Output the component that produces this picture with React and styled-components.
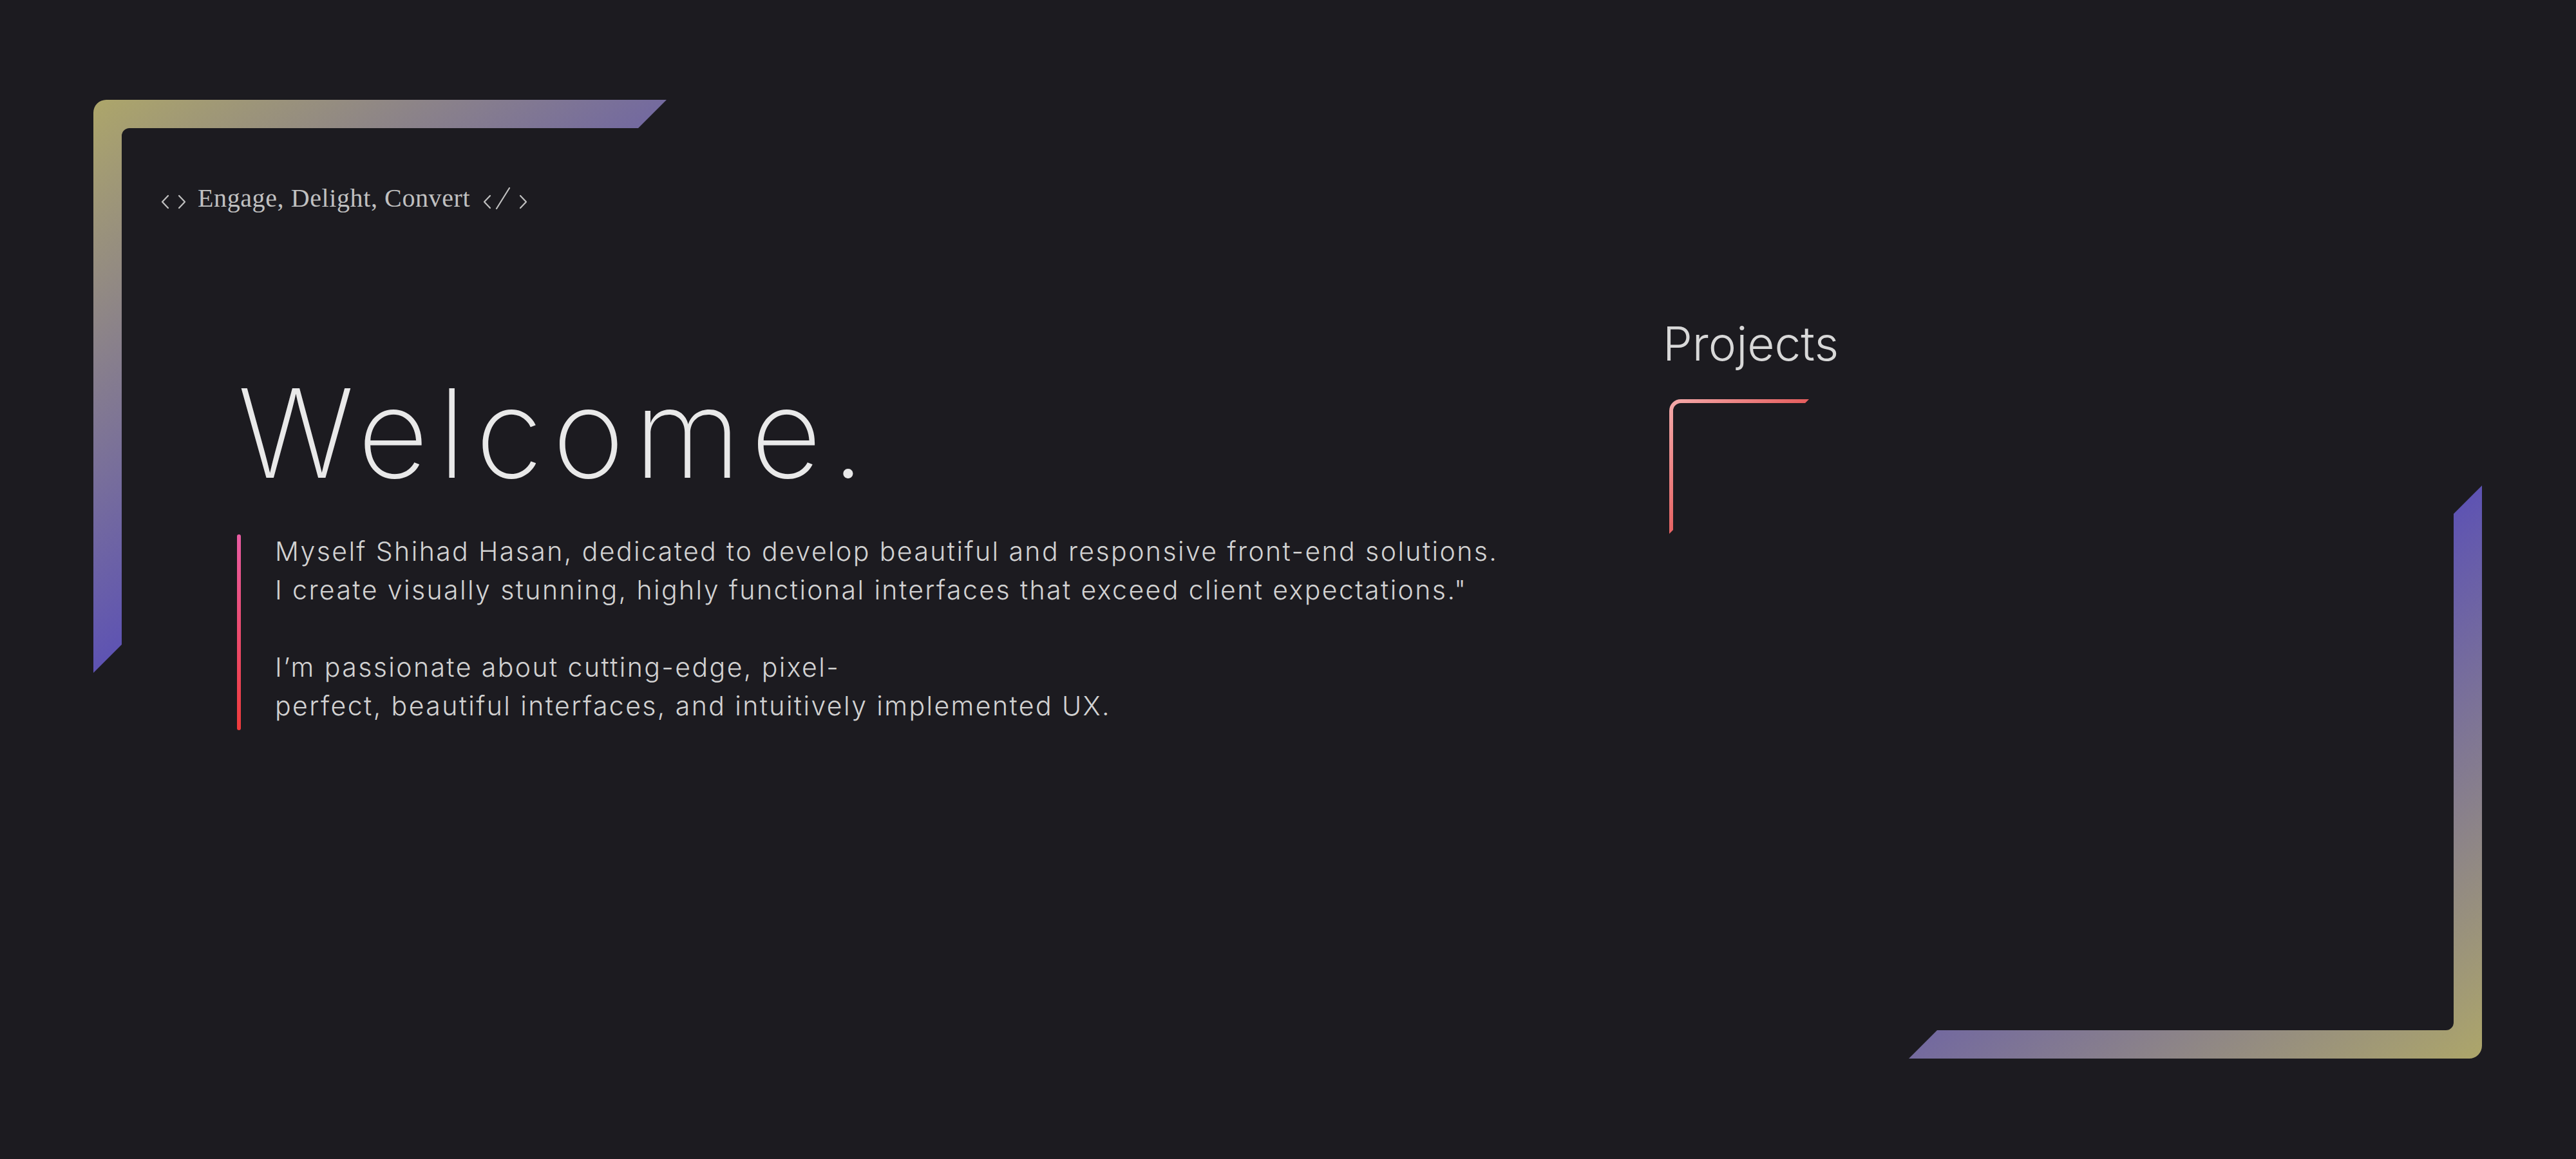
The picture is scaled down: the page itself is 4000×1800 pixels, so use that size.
import React from 'react';
import styled, { createGlobalStyle } from 'styled-components';

const GlobalStyle = createGlobalStyle`
  html, body {
    margin: 0;
    padding: 0;
    background: #1c1b20;
  }
  body {
    min-height: 1800px;
    font-family: Inter, "Noto Sans", sans-serif;
  }
`;

const Page = styled.main`
  display: flex;
  align-items: flex-start;
  min-height: 1800px;
  padding: 155px 0 0 145px;
  box-sizing: border-box;
  background: #1c1b20;
`;

const Hero = styled.section`
  position: relative;
  flex: 0 0 2437px;
  min-height: 890px;
  box-sizing: border-box;
  padding: 133px 0 0 105px;
`;

const Frame = styled.svg`
  position: absolute;
  left: ${p => p.$left}px;
  top: ${p => p.$top}px;
  transform: ${p => (p.$flip ? 'rotate(180deg)' : 'none')};
  pointer-events: none;
`;

const Tagline = styled.p`
  display: flex;
  align-items: center;
  height: 40px;
  margin: 0;
  color: #c0c0c0;
  font-family: "Liberation Serif", serif;
  font-size: 40px;
  line-height: 1;
`;

const TagText = styled.span`
  margin: 0 20px 0 17px;
  letter-spacing: 0.6px;
`;

const Intro = styled.div`
  margin: 249px 0 0 118px;
`;

const Title = styled.h1`
  margin: 0 0 0 1px;
  color: #e9e9e9;
  font-family: Inter, sans-serif;
  font-size: 191px;
  font-weight: 200;
  line-height: 1;
  letter-spacing: 15px;
`;

const Quote = styled.div`
  display: flex;
  align-items: flex-start;
  gap: 53px;
  margin-top: 58px;
`;

const Bar = styled.span`
  flex: 0 0 6px;
  height: 304px;
  margin-top: 4px;
  border-radius: 3px;
  background: linear-gradient(180deg, #e95ca3 0%, #ef3b3b 100%);
`;

const Text = styled.p`
  margin: 0;
  color: #d2d2d2;
  font-family: Inter, sans-serif;
  font-size: 41px;
  font-weight: 300;
  line-height: 60px;
  letter-spacing: 2.4px;
`;

const Projects = styled.section`
  position: relative;
  flex: 1;
  margin-top: 342px;
  min-height: 1150px;
`;

const SectionTitle = styled.h2`
  margin: 0;
  color: #d8d8d8;
  font-family: Inter, sans-serif;
  font-size: 73px;
  font-weight: 300;
  line-height: 1;
`;

const Corner = styled.svg`
  display: block;
  margin: 50px 0 0 10px;
`;

function bracketPath(w, h, t, R, r) {
  return [
    `M${R} 0`,
    `H${w}`,
    `L${w - t} ${t}`,
    `H${t + r}`,
    `A${r} ${r} 0 0 0 ${t} ${t + r}`,
    `V${h - t}`,
    `L0 ${h}`,
    `V${R}`,
    `A${R} ${R} 0 0 1 ${R} 0`,
    'Z',
  ].join(' ');
}

function Bracket({ id, left, top, flip }) {
  const s = 890;
  return (
    <Frame $left={left} $top={top} $flip={flip} width={s} height={s} viewBox={`0 0 ${s} ${s}`}>
      <defs>
        <linearGradient id={id} gradientUnits="userSpaceOnUse" x1="0" y1="0" x2={s * 0.5} y2={s * 0.7}>
          <stop offset="0" stopColor="#ada66a" />
          <stop offset="1" stopColor="#594eb7" />
        </linearGradient>
      </defs>
      <path d={bracketPath(s, s, 44, 20, 12)} fill={`url(#${id})`} />
    </Frame>
  );
}

function CodeOpen() {
  return (
    <svg width="40" height="34" viewBox="0 0 40 34" fill="none" stroke="#c0c0c0" strokeWidth="2.2" strokeLinecap="round" strokeLinejoin="round">
      <polyline points="11,13 2,22.5 11,32" />
      <polyline points="28,13 37,22.5 28,32" />
    </svg>
  );
}

function CodeClose() {
  return (
    <svg width="70" height="34" viewBox="0 0 70 34" fill="none" stroke="#c0c0c0" strokeWidth="2.2" strokeLinecap="round" strokeLinejoin="round">
      <polyline points="11,13 2,22.5 11,32" />
      <line x1="41" y1="1" x2="21" y2="33" />
      <polyline points="58,13 67,22.5 58,32" />
    </svg>
  );
}

export default function App() {
  const cw = 217;
  const ch = 209;
  return (
    <>
      <GlobalStyle />
      <Page>
        <Hero>
          <Bracket id="frame-top" left={0} top={0} />
          <Tagline>
            <CodeOpen />
            <TagText>Engage, Delight, Convert</TagText>
            <CodeClose />
          </Tagline>
          <Intro>
            <Title>Welcome.</Title>
            <Quote>
              <Bar />
              <Text>
                Myself Shihad Hasan, dedicated to develop beautiful and responsive front-end solutions.
                <br />
                I create visually stunning, highly functional interfaces that exceed client expectations."
                <br />
                <br />
                I’m passionate about cutting-edge, pixel-
                <br />
                perfect, beautiful interfaces, and intuitively implemented UX.
              </Text>
            </Quote>
          </Intro>
        </Hero>
        <Projects>
          <SectionTitle>Projects</SectionTitle>
          <Corner width={cw} height={ch} viewBox={`0 0 ${cw} ${ch}`}>
            <defs>
              <linearGradient id="corner-red" gradientUnits="userSpaceOnUse" x1="0" y1="0" x2={cw * 0.8} y2={ch * 0.8}>
                <stop offset="0" stopColor="#f4abab" />
                <stop offset="1" stopColor="#dc3434" />
              </linearGradient>
            </defs>
            <path d={bracketPath(cw, ch, 6, 18, 12)} fill="url(#corner-red)" />
          </Corner>
          <Bracket id="frame-bottom" left={382} top={257} flip />
        </Projects>
      </Page>
    </>
  );
}
